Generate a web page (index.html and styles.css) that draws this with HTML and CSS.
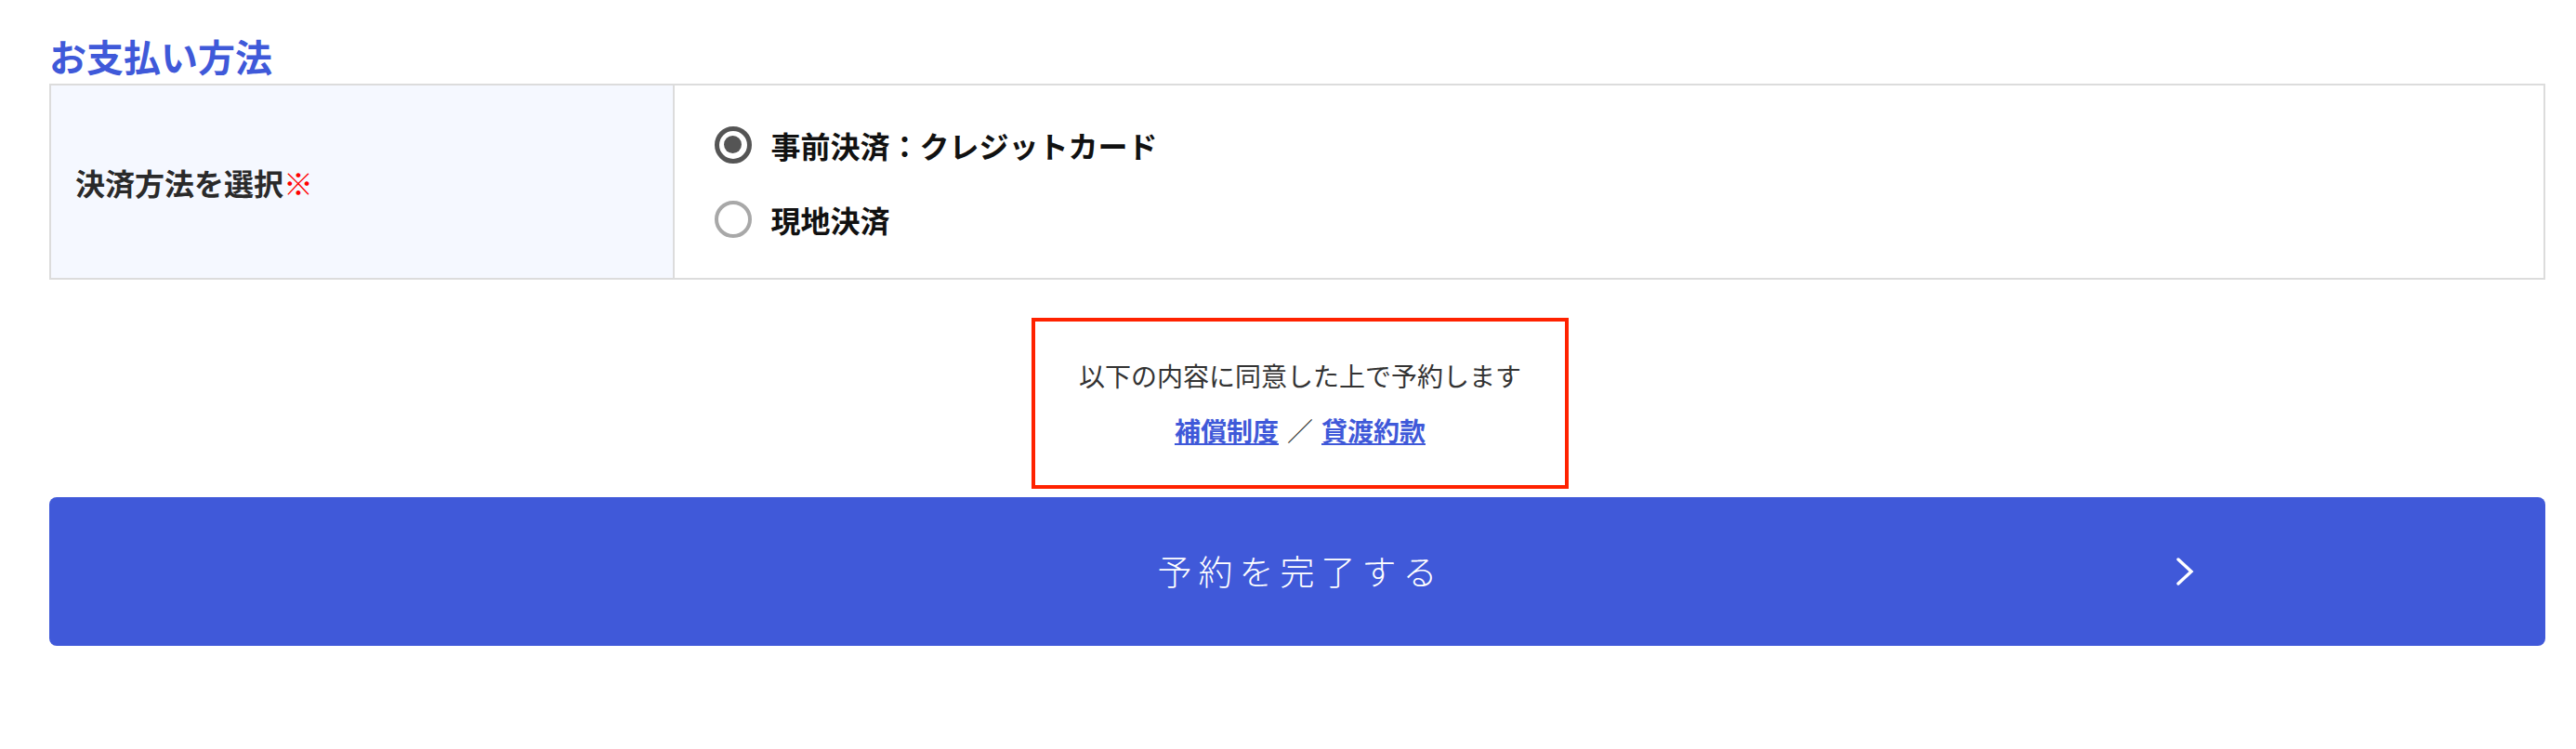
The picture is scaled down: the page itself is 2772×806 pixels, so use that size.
FILE: index.html
```html
<!doctype html>
<html>

<head>
    <title>お支払い方法</title>
    <link rel="stylesheet" href="styles.css">
</head>

<body>
    <div class="wrap">
        <h2 class="title">お支払い方法</h2>
        <div class="pay_table">
            <div class="pay_head">決済方法を選択<span class="req">※</span></div>
            <div class="pay_body">
                <label class="radio_row">
                    <span class="radio checked"></span>
                    <span class="radio_text">事前決済：クレジットカード</span>
                </label>
                <label class="radio_row">
                    <span class="radio"></span>
                    <span class="radio_text">現地決済</span>
                </label>
            </div>
        </div>
        <div class="agree">
            <div class="agree_box">
                <p class="agree_text">以下の内容に同意した上で予約します</p>
                <p class="agree_links"><a href="#">補償制度</a><span class="slash">／</span><a href="#">貸渡約款</a></p>
            </div>
        </div>
        <button class="submit">
            <span class="submit_text">予約を完了する</span>
            <svg class="arrow" width="20" height="30" viewBox="0 0 20 30">
                <path d="M2 2 L16 15 L2 28" fill="none" stroke="#fff" stroke-width="3.4" stroke-linecap="round" stroke-linejoin="miter"/>
            </svg>
        </button>
    </div>
</body>

</html>
```

FILE: styles.css
```css
body {
    margin: 0;
    background-color: #fff;
    color: #222;
    font-family: "Noto Sans CJK JP", "Noto Sans", sans-serif;
}

.wrap {
    padding: 0 33px 0 53px;
}

.title {
    margin: 30px 0 0;
    height: 60px;
    line-height: 60px;
    font-size: 40px;
    font-weight: bold;
    color: #3f59d9;
}

.pay_table {
    display: flex;
    border: 2px solid #dcdcdc;
    height: 207px;
}

.pay_head {
    width: 25%;
    box-sizing: border-box;
    display: flex;
    align-items: center;
    padding-left: 26px;
    background-color: #f5f8ff;
    border-right: 2px solid #dcdcdc;
    font-size: 32px;
    font-weight: bold;
    color: #2a2a2a;
}

.req {
    color: #ff0000;
    font-weight: normal;
}

.pay_body {
    flex: 1;
    display: flex;
    flex-direction: column;
    justify-content: center;
    gap: 32px;
    padding-left: 43px;
}

.radio_row {
    display: flex;
    align-items: center;
    height: 48px;
    cursor: pointer;
}

.radio {
    width: 40px;
    height: 40px;
    box-sizing: border-box;
    border-radius: 50%;
    border: 4px solid #a8a8a8;
    display: flex;
    align-items: center;
    justify-content: center;
}

.radio.checked {
    border: 5px solid #555;
}

.radio.checked::after {
    content: "";
    width: 19px;
    height: 19px;
    border-radius: 50%;
    background-color: #555;
}

.radio_text {
    margin-left: 21px;
    font-size: 32px;
    font-weight: bold;
    color: #111;
}

.agree {
    display: flex;
    justify-content: center;
    margin-top: 41px;
}

.agree_box {
    width: 578px;
    box-sizing: border-box;
    border: 4px solid #ff2200;
    padding: 34px 0 35px;
    margin-left: 6px;
    text-align: center;
}

.agree_text {
    margin: 0;
    font-size: 28px;
    line-height: 48px;
    font-weight: normal;
    color: #333;
}

.agree_links {
    margin: 11px 0 0;
    font-size: 28px;
    line-height: 48px;
    color: #333;
}

.agree_links a {
    color: #3f59d9;
    font-weight: bold;
    text-decoration: underline;
}

.slash {
    margin: 0 9px;
}

.submit {
    position: relative;
    display: flex;
    align-items: center;
    justify-content: center;
    width: 100%;
    height: 160px;
    margin-top: 9px;
    border: none;
    border-radius: 8px;
    background-color: #4059d9;
    color: #fff;
    font-family: "Noto Sans CJK JP", "Noto Sans", sans-serif;
    cursor: pointer;
}

.submit_text {
    font-size: 37px;
    font-weight: 300;
    letter-spacing: 7px;
    margin-right: -7px;
    margin-top: -3px;
}

.arrow {
    position: absolute;
    right: 377px;
    top: 50%;
    margin-top: -15px;
}
```
